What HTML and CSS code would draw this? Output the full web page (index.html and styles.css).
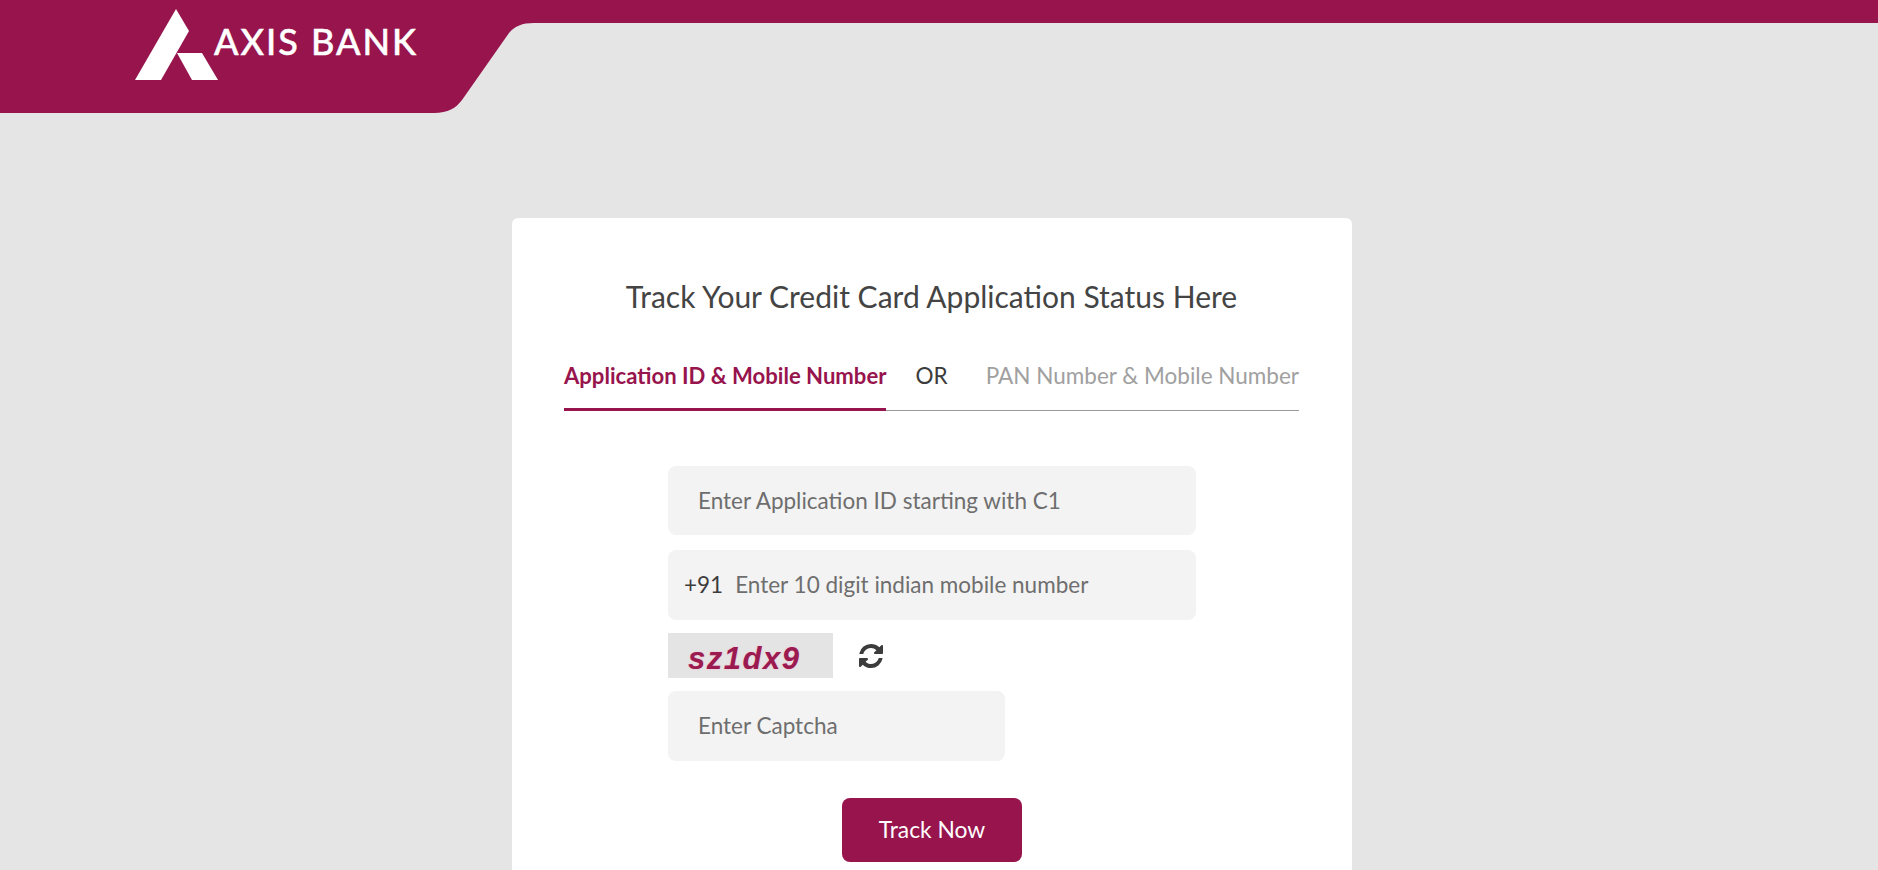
FILE: index.html
```html
<!DOCTYPE html>
<html lang="en">
<head>
<meta charset="utf-8">
<title>Track Your Credit Card Application Status</title>
<link rel="stylesheet" href="styles.css">
</head>
<body>
<header class="site-header">
  <svg class="header-shape" viewBox="0 0 1878 113" preserveAspectRatio="none" aria-hidden="true">
    <path d="M0 0H1878V23H534C522 23 515 26 509 33L462 100C456 108 448 113 434 113H0Z"/>
  </svg>
  <a class="logo" href="#">
    <svg class="logo-mark" viewBox="0 0 84 72" aria-hidden="true">
      <path d="M41 0L54 22L26 71H0Z"/>
      <path d="M42 44H67L83 71H57Z"/>
    </svg>
    <span class="logo-text">AXIS BANK</span>
  </a>
</header>
<main class="card">
  <h1 class="card-title">Track Your Credit Card Application Status Here</h1>
  <div class="tabs">
    <span class="tab tab-active">Application ID &amp; Mobile Number</span>
    <span class="tab-or">OR</span>
    <span class="tab tab-muted">PAN Number &amp; Mobile Number</span>
  </div>
  <form class="form">
    <div class="field"><span class="placeholder">Enter Application ID starting with C1</span></div>
    <div class="field field-phone"><span class="prefix">+91</span><span class="placeholder">Enter 10 digit indian mobile number</span></div>
    <div class="captcha-row">
      <div class="captcha-image"><span class="captcha-text">sz1dx9</span></div>
      <svg class="refresh" viewBox="0 0 1536 1536" aria-hidden="true">
        <path d="M1511 928q0 5-1 7-64 268-268 434.5t-478 166.5q-146 0-282.5-55t-243.5-157l-129 129q-19 19-45 19t-45-19-19-45v-448q0-26 19-45t45-19h448q26 0 45 19t19 45-19 45l-137 137q71 66 161 102t187 36q134 0 250-65t186-179q11-17 53-117 8-23 30-23h192q13 0 22.5 9.5t9.5 22.5zm25-800v448q0 26-19 45t-45 19h-448q-26 0-45-19t-19-45 19-45l138-138q-148-137-349-137-134 0-250 65t-186 179q-11 17-53 117-8 23-30 23h-199q-13 0-22.5-9.5t-9.5-22.5v-7q65-268 270-434.5t480-166.5q146 0 284 55.5t245 156.5l130-129q19-19 45-19t45 19 19 45z"/>
      </svg>
    </div>
    <div class="field field-captcha"><span class="placeholder">Enter Captcha</span></div>
    <div class="actions"><button class="track-btn" type="button">Track Now</button></div>
  </form>
</main>
</body>
</html>
```
FILE: styles.css
```css
* { box-sizing: border-box; }
html, body { margin: 0; height: 100%; overflow: hidden; }
body {
  background: #e5e5e5;
  font-family: Lato, "Liberation Sans", sans-serif;
  color: #3c3c3c;
}
.site-header { position: relative; height: 113px; }
.header-shape { position: absolute; inset: 0; width: 100%; height: 100%; fill: #97144d; }
.logo {
  position: relative;
  display: flex;
  align-items: flex-start;
  padding: 9px 0 0 135px;
  color: #fff;
  text-decoration: none;
}
.logo-mark { width: 84px; height: 72px; fill: #fff; flex: none; }
.logo-text {
  margin: 12px 0 0 -5px;
  font-size: 36px;
  line-height: 40px;
  font-weight: 500;
  letter-spacing: 2px;
  -webkit-text-stroke: 0.5px #fff;
  white-space: nowrap;
}
.card {
  width: 840px;
  height: 800px;
  margin: 105px 0 0 512px;
  padding: 0 53px 0 52px;
  background: #fff;
  border-radius: 6px;
}
.card-title {
  margin: 0;
  padding-top: 59px;
  font-size: 30px;
  line-height: 38px;
  font-weight: 400;
  color: #444;
  text-align: center;
}
.tabs {
  display: flex;
  align-items: flex-start;
  margin-top: 39px;
  height: 57px;
  padding-top: 7px;
  border-bottom: 1px solid #9b9b9b;
  font-size: 22.5px;
  line-height: 30px;
}
.tab { display: block; height: 50px; white-space: nowrap; }
.tab-active {
  color: #97144d;
  font-weight: 700;
  font-size: 22.1px;
  border-bottom: 3px solid #97144d;
}
.tab-or { margin-left: 29px; }
.tab-muted { margin-left: auto; color: #a0a0a0; }
.form { margin: 55px 0 0 104px; width: 528px; }
.field {
  display: flex;
  align-items: center;
  height: 69px;
  padding-left: 30px;
  background: #f3f3f3;
  border-radius: 8px;
  font-size: 22.5px;
}
.field-phone { margin-top: 15px; height: 70px; padding: 0 0 2px 16px; }
.field-captcha { width: 337px; height: 70px; margin-top: 13px; padding-bottom: 2px; }
.placeholder { color: #6e6e6e; white-space: nowrap; }
.prefix { margin-right: 12px; color: #3c3c3c; }
.captcha-row { display: flex; align-items: center; margin-top: 13px; }
.captcha-image {
  display: flex;
  align-items: center;
  width: 165px;
  height: 45px;
  padding: 7px 0 0 20px;
  background: #e4e4e4;
}
.captcha-text {
  font-family: "Liberation Sans", sans-serif;
  font-size: 31px;
  font-weight: 700;
  font-style: italic;
  letter-spacing: 1.5px;
  color: #9b1a4f;
  text-shadow: 0 0 2px #f3b6cc;
}
.refresh { width: 24px; height: 24px; margin: 1px 0 0 26px; fill: #3c3c3c; }
.actions { display: flex; justify-content: center; margin: 37px 0 0 0; }
.track-btn {
  width: 180px;
  height: 64px;
  padding: 0 0 2px;
  border: 0;
  border-radius: 8px;
  background: #97144d;
  color: #fff;
  font: 400 22.8px Lato, "Liberation Sans", sans-serif;
}
```
